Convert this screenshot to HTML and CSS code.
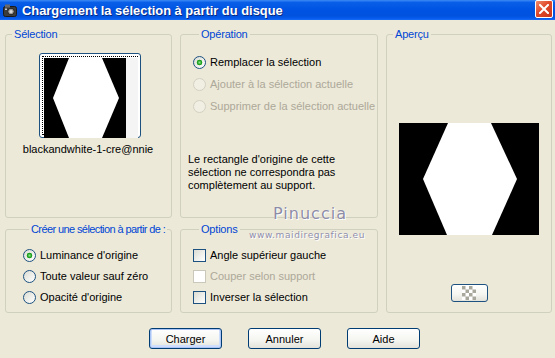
FILE: index.html
```html
<!DOCTYPE html>
<html lang="fr">
<head>
    <meta charset="UTF-8">
    <title>Chargement la sélection à partir du disque</title>
    <link rel="stylesheet" href="styles.css">
</head>
<body>
    <div class="window">
        <div class="titlebar">
            <svg class="app-icon" width="14" height="13" viewBox="0 0 14 13">
                <rect x="0.5" y="2.5" width="13" height="10" rx="2" fill="#3c3c3c" stroke="#1a1a1a"/>
                <rect x="2" y="0.5" width="5" height="3" fill="#6a6a6a"/>
                <circle cx="8" cy="7.5" r="3.3" fill="#9a9a9a" stroke="#222"/>
                <circle cx="8" cy="7.5" r="1.5" fill="#d8d8d8"/>
                <rect x="2" y="4.5" width="2" height="1.5" fill="#c8c8c8"/>
            </svg>
            <span class="title">Chargement la sélection à partir du disque</span>
            <span class="close">
                <svg width="10" height="10" viewBox="0 0 10 10">
                    <path d="M1 1 L9 9 M9 1 L1 9" stroke="#fff" stroke-width="2" stroke-linecap="square"/>
                </svg>
            </span>
        </div>

        <div class="dialog">
            <div class="groups">
                <fieldset class="group sel">
                    <legend>Sélection</legend>
                    <div class="thumb">
                        <div class="thumb-inner">
                            <svg width="94" height="80" viewBox="0 0 94 80">
                                <rect width="94" height="80" fill="#f4f4f4"/>
                                <rect width="82" height="80" fill="#000"/>
                                <polygon points="25,0 58,0 75,40 58,80 25,80 9,40" fill="#fff"/>
                            </svg>
                        </div>
                    </div>
                    <div class="caption">blackandwhite-1-cre@nnie</div>
                </fieldset>

                <fieldset class="group op">
                    <legend>Opération</legend>
                    <div class="choices">
                        <label class="choice"><input type="radio" name="op" checked> Remplacer la sélection</label>
                        <label class="choice off"><input type="radio" name="op" disabled> Ajouter à la sélection actuelle</label>
                        <label class="choice off"><input type="radio" name="op" disabled> Supprimer de la sélection actuelle</label>
                    </div>
                    <p class="note">Le rectangle d'origine de cette sélection ne correspondra pas complètement au support.</p>
                </fieldset>

                <fieldset class="group preview">
                    <legend>Aperçu</legend>
                    <svg class="preview-img" width="140" height="112" viewBox="0 0 140 112">
                        <rect width="140" height="112" fill="#000"/>
                        <polygon points="49,0 92,0 118,56 93,112 48,112 24,56" fill="#fff"/>
                    </svg>
                    <button class="btn small" type="button">
                        <svg width="14" height="14" viewBox="0 0 14 14">
                            <rect width="14" height="14" fill="#fff"/>
                            <path d="M0 0h3.5v3.5H0zM7 0h3.5v3.5H7zM3.5 3.5H7V7H3.5zM10.5 3.5H14V7h-3.5zM0 7h3.5v3.5H0zM7 7h3.5v3.5H7zM3.5 10.5H7V14H3.5zM10.5 10.5H14V14h-3.5z" fill="#a9a89c"/>
                        </svg>
                    </button>
                </fieldset>

                <fieldset class="group source">
                    <legend class="long">Créer une sélection à partir de :</legend>
                    <div class="choices">
                        <label class="choice"><input type="radio" name="src" checked> Luminance d'origine</label>
                        <label class="choice"><input type="radio" name="src"> Toute valeur sauf zéro</label>
                        <label class="choice"><input type="radio" name="src"> Opacité d'origine</label>
                    </div>
                </fieldset>

                <fieldset class="group options">
                    <legend>Options</legend>
                    <div class="choices">
                        <label class="choice"><input type="checkbox"> Angle supérieur gauche</label>
                        <label class="choice off"><input type="checkbox" disabled> Couper selon support</label>
                        <label class="choice"><input type="checkbox"> Inverser la sélection</label>
                    </div>
                </fieldset>
            </div>

            <div class="actions">
                <button class="btn default" type="button">Charger</button>
                <button class="btn" type="button">Annuler</button>
                <button class="btn" type="button">Aide</button>
            </div>

            <div class="watermark">
                <span class="wm-name">Pinuccia</span>
                <span class="wm-url">www.maidiregrafica.eu</span>
            </div>
        </div>
    </div>
</body>
</html>
```

FILE: styles.css
```css
body {
    margin: 0;
    font-family: "Liberation Sans", Arial, sans-serif;
    font-size: 11px;
    background-color: #ece9d8;
}
.window {
    width: 555px;
    height: 358px;
    background-color: #ece9d8;
    overflow: hidden;
}
.titlebar {
    height: 20px;
    display: flex;
    align-items: center;
    padding: 0 2px 0 3px;
    background: linear-gradient(#3d8bf7 0%, #0a5fe8 12%, #0054e3 45%, #0052df 80%, #0a5ff0 95%, #1c6df5 100%);
}
.app-icon {
    flex: none;
}
.title {
    margin-left: 5px;
    color: #fff;
    font-weight: bold;
    font-size: 12.9px;
    text-shadow: 1px 1px 0 #0a2a80;
}
.close {
    margin-left: auto;
    width: 16px;
    height: 16px;
    display: flex;
    align-items: center;
    justify-content: center;
    border: 1px solid #fff;
    border-radius: 2px;
    background: linear-gradient(135deg, #f08b6c, #e04a2b 45%, #c8351a);
    margin-top: -2px;
}
.dialog {
    position: relative;
}
.groups {
    display: grid;
    grid-template-columns: 167px 198px 166px;
    grid-template-rows: 191px 91px;
    column-gap: 8px;
    row-gap: 4px;
    padding: 7px 0 0 5px;
}
.group {
    margin: 0;
    padding: 0;
    min-width: 0;
    border: 1px solid #d0d0bf;
    border-radius: 3px;
    box-sizing: border-box;
}
.group legend {
    padding: 0 2px;
    margin-left: 6px;
    color: #0046d5;
    font-size: 11px;
    letter-spacing: -0.2px;
    line-height: 14px;
    white-space: nowrap;
}
.group legend.long {
    letter-spacing: -0.6px;
}
.sel {
    grid-column: 1;
    grid-row: 1;
}
.op {
    grid-column: 2;
    grid-row: 1;
    padding: 13px 0 0 12px;
}
.preview {
    grid-column: 3;
    grid-row: 1 / span 2;
    display: flex;
    flex-direction: column;
    align-items: center;
}
.source {
    grid-column: 1;
    grid-row: 2;
    padding: 11px 0 0 17px;
}
.options {
    grid-column: 2;
    grid-row: 2;
    padding: 11px 0 0 12px;
}
.thumb {
    width: 102px;
    height: 85px;
    margin: 12px 0 0 33px;
    box-sizing: border-box;
    border: 1px solid #1c5180;
    border-radius: 3px;
    padding: 2px;
    background: #fff;
}
.thumb-inner {
    height: 100%;
    box-sizing: border-box;
    border: 1px dotted #000;
    padding: 0 0 0 1px;
}
.thumb-inner svg {
    display: block;
    margin-top: 1px;
}
.caption {
    margin-top: 5px;
    text-align: center;
    line-height: 13px;
    padding-right: 1px;
}
.choices {
    display: flex;
    flex-direction: column;
    gap: 5px;
}
.op .choices {
    gap: 6px;
}
.choice {
    display: flex;
    align-items: center;
    gap: 4px;
    height: 16px;
    color: #000;
}
.choice.off {
    color: #aca899;
}
.choice input {
    appearance: none;
    -webkit-appearance: none;
    margin: 0;
    width: 13px;
    height: 13px;
    flex: none;
    border: 1px solid #1c5180;
    background: linear-gradient(135deg, #dcdcd4, #ffffff);
}
.choice input[type="radio"] {
    border-radius: 50%;
}
.choice input[type="radio"]:checked {
    background: radial-gradient(circle, #8ee78e 0, #21a121 2px, #21a121 2.6px, transparent 3.1px), linear-gradient(135deg, #dcdcd4, #ffffff);
}
.choice input:disabled {
    border-color: #d3d0c1;
    background: #f1efe4;
}
.choice input[type="checkbox"]:disabled {
    background: #fff;
    border-color: #cac8bb;
}
.note {
    margin: 39px 0 0 -5px;
    line-height: 13px;
    width: 180px;
}
.preview-img {
    display: block;
    margin-top: 82px;
}
.btn {
    font-family: "Liberation Sans", Arial, sans-serif;
    font-size: 11px;
    color: #000;
    width: 73px;
    height: 21px;
    padding: 0;
    border: 1px solid #003c74;
    border-radius: 3px;
    background: linear-gradient(#ffffff, #f4f4f0 60%, #e3e2da);
}
.btn.default {
    box-shadow: inset 0 0 0 1px #a9c4f5, inset 0 -1px 0 2px #cfdefa;
}
.btn.small {
    width: 37px;
    height: 18px;
    margin-top: 49px;
    display: flex;
    align-items: center;
    justify-content: center;
    border-color: #1c5180;
}
.btn.small svg {
    display: block;
}
.actions {
    display: flex;
    gap: 26px;
    padding: 15px 0 0 149px;
}
.watermark {
    position: absolute;
    left: 248px;
    top: 184px;
    width: 118px;
    display: flex;
    flex-direction: column;
    align-items: center;
    color: #8d8ca6;
    pointer-events: none;
}
.wm-name {
    font-family: "DejaVu Sans", sans-serif;
    font-size: 16px;
    letter-spacing: 1px;
    line-height: 20px;
    margin-left: 6px;
    text-shadow: 0 0 1px #fff, 1px 1px 0 #fff;
}
.wm-url {
    font-family: "DejaVu Sans", sans-serif;
    font-size: 9px;
    letter-spacing: 0.6px;
    line-height: 14px;
    margin-top: 4px;
    text-shadow: 0 0 1px #fff, 1px 1px 0 #fff;
}
```
